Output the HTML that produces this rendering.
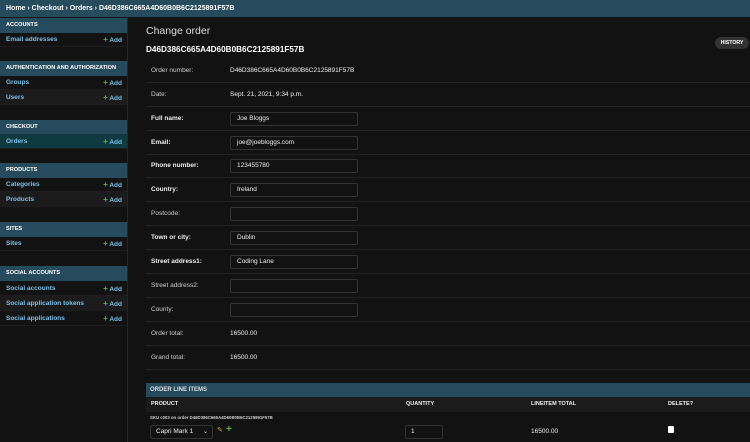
<!DOCTYPE html>
<html><head><meta charset="utf-8"><style>
*{box-sizing:border-box;margin:0;padding:0}
body{width:750px;height:442px;overflow:hidden;background:#121212;font-family:"Liberation Sans",sans-serif;color:#eee;position:relative;font-size:7px}
.bc{position:absolute;left:0;top:0;width:750px;height:17px;background:#264b5d;color:#fff;font-size:7px;font-weight:bold;line-height:17px;padding-left:6px}
.side{position:absolute;left:0;top:17px;width:128px;height:425px;background:#121212;border-right:1px solid #262626}
.sh{position:absolute;left:0;width:127px;height:15px;background:#264b5d;color:#fff;font-size:5.6px;font-weight:bold;line-height:15px;padding-left:6px;white-space:nowrap;overflow:hidden}
.sr{position:absolute;left:0;width:127px;height:15px;line-height:15px;padding-left:6px;color:#79c0e8;font-size:6.5px;font-weight:bold;border-bottom:1px solid #1e1e1e;white-space:nowrap}
.sr .a{position:absolute;right:5px;top:0;color:#79c0e8}
.sr .a b{color:#5eb337;font-size:8px}
.alt{background:#1b1b1b}
.sel{background:#0e3a40}
.t1{position:absolute;left:146px;top:25px;font-size:10.5px;color:#ddd}
.t2{position:absolute;left:146px;top:45px;font-size:8.2px;font-weight:bold;color:#fff}
.hist{position:absolute;left:715px;top:37px;width:34px;height:12px;border-radius:6px;background:#333;color:#fff;font-size:5.2px;font-weight:bold;line-height:12px;text-align:center}
.row{position:absolute;left:146px;width:604px;height:24px;border-bottom:1px solid #222}
.row .l{position:absolute;left:5px;top:0;line-height:24px;color:#ccc;font-size:6.5px}
.row .l.b{font-weight:bold;color:#eee}
.row .v{position:absolute;left:84px;top:0;line-height:24px;color:#eee;font-size:6.5px}
.row .in{position:absolute;left:84px;top:5px;width:128px;height:14px;border:1px solid #333;border-radius:2px;background:#121212;padding-left:6px;line-height:11px;color:#eee;font-size:6.5px}
.ih{position:absolute;left:146px;top:383px;width:604px;height:14px;background:#264b5d;color:#ddd;font-size:6px;font-weight:bold;line-height:14px;padding-left:4px}
.ch{position:absolute;left:146px;top:397px;width:604px;height:15px;background:#1b1b1b;color:#eee;font-size:5.5px;font-weight:bold;line-height:15px}
.ch span{position:absolute;top:0}
</style></head><body>
<div class="bc">Home › Checkout › Orders › D46D386C665A4D60B0B6C2125891F57B</div>
<div class="side">
<div class="sh" style="top:1px">ACCOUNTS</div>
<div class="sr" style="top:15px">Email addresses<span class="a"><b>+</b> Add</span></div>
<div class="sh" style="top:44px">AUTHENTICATION AND AUTHORIZATION</div>
<div class="sr" style="top:58px">Groups<span class="a"><b>+</b> Add</span></div>
<div class="sr alt" style="top:73px">Users<span class="a"><b>+</b> Add</span></div>
<div class="sh" style="top:103px">CHECKOUT</div>
<div class="sr sel" style="top:117px">Orders<span class="a"><b>+</b> Add</span></div>
<div class="sh" style="top:146px">PRODUCTS</div>
<div class="sr" style="top:160px">Categories<span class="a"><b>+</b> Add</span></div>
<div class="sr alt" style="top:175px">Products<span class="a"><b>+</b> Add</span></div>
<div class="sh" style="top:205px">SITES</div>
<div class="sr" style="top:219px">Sites<span class="a"><b>+</b> Add</span></div>
<div class="sh" style="top:249px">SOCIAL ACCOUNTS</div>
<div class="sr" style="top:264px">Social accounts<span class="a"><b>+</b> Add</span></div>
<div class="sr alt" style="top:279px">Social application tokens<span class="a"><b>+</b> Add</span></div>
<div class="sr" style="top:294px">Social applications<span class="a"><b>+</b> Add</span></div>
</div>
<div class="t1">Change order</div>
<div class="t2">D46D386C665A4D60B0B6C2125891F57B</div>
<div class="hist">HISTORY</div>
<div class="row" style="top:59px"><span class="l">Order number:</span><span class="v">D46D386C665A4D60B0B6C2125891F57B</span></div>
<div class="row" style="top:83px"><span class="l">Date:</span><span class="v">Sept. 21, 2021, 9:34 p.m.</span></div>
<div class="row" style="top:107px"><span class="l b">Full name:</span><span class="in">Joe Bloggs</span></div>
<div class="row" style="top:131px"><span class="l b">Email:</span><span class="in">joe@joebloggs.com</span></div>
<div class="row" style="top:154px"><span class="l b">Phone number:</span><span class="in">123455780</span></div>
<div class="row" style="top:178px"><span class="l b">Country:</span><span class="in">Ireland</span></div>
<div class="row" style="top:202px"><span class="l">Postcode:</span><span class="in"></span></div>
<div class="row" style="top:226px"><span class="l b">Town or city:</span><span class="in">Dublin</span></div>
<div class="row" style="top:250px"><span class="l b">Street address1:</span><span class="in">Coding Lane</span></div>
<div class="row" style="top:274px"><span class="l">Street address2:</span><span class="in"></span></div>
<div class="row" style="top:298px"><span class="l">County:</span><span class="in"></span></div>
<div class="row" style="top:322px"><span class="l">Order total:</span><span class="v">16500.00</span></div>
<div class="row" style="top:346px"><span class="l">Grand total:</span><span class="v">16500.00</span></div>
<div class="ih">ORDER LINE ITEMS</div>
<div class="ch"><span style="left:5px">PRODUCT</span><span style="left:260px">QUANTITY</span><span style="left:385px">LINEITEM TOTAL</span><span style="left:522px">DELETE?</span></div>
<div style="position:absolute;left:150px;top:415px;font-size:4.3px;color:#ccc;font-weight:bold">SKU c003 on order D46D386C665A4D60B0B6C2125891F57B</div>
<div style="position:absolute;left:150px;top:425px;width:63px;height:14px;border:1px solid #333;border-radius:2px;padding-left:5px;line-height:12px;font-size:6.5px;color:#eee">Capri Mark 1<span style="position:absolute;right:4px;font-size:6px">⌄</span></div>
<div style="position:absolute;left:217px;top:426px;font-size:7px;color:#d9a520">✎</div>
<div style="position:absolute;left:226px;top:424px;font-size:10px;color:#5eb337;font-weight:bold">+</div>
<div style="position:absolute;left:405px;top:425px;width:38px;height:14px;border:1px solid #333;border-radius:2px;padding-left:5px;line-height:12px;font-size:6.5px">1</div>
<div style="position:absolute;left:531px;top:428px;font-size:6.5px">16500.00</div>
<div style="position:absolute;left:668px;top:426px;width:6px;height:7px;background:#fff;border-radius:1px"></div>
</body></html>
